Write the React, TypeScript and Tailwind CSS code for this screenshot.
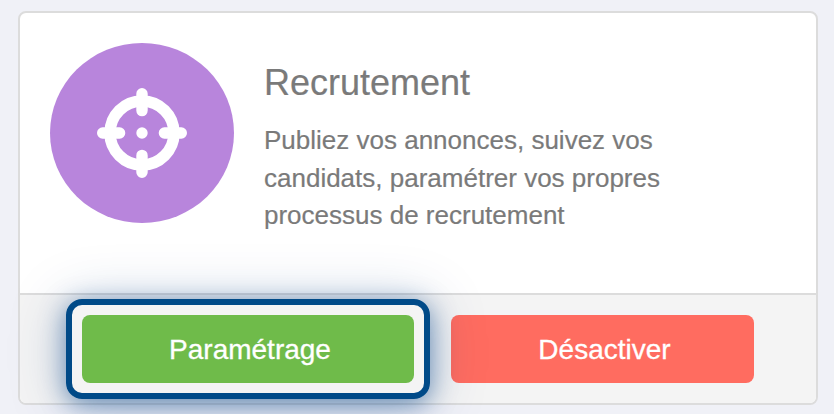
import * as React from 'react';

interface ActionButtonProps extends React.ButtonHTMLAttributes<HTMLButtonElement> {
  tone: 'success' | 'danger';
}

const toneClasses = {
  success: 'w-[332px] bg-[#6fbb4a]',
  danger: 'w-[303px] bg-[#ff6c60]',
};

const ActionButton = ({ tone, children, ...props }: ActionButtonProps) => (
  <button
    type="button"
    className={`h-[68px] rounded-lg pt-0.5 pl-1 text-[28px] leading-none text-white [-webkit-text-stroke:0.3px] ${toneClasses[tone]}`}
    {...props}
  >
    {children}
  </button>
);

const TargetIcon = () => (
  <svg
    width="90"
    height="90"
    viewBox="0 0 90 90"
    fill="none"
    stroke="white"
    strokeWidth="11.4"
    strokeLinecap="round"
    aria-hidden="true"
  >
    <circle cx="45" cy="45" r="32" />
    <path d="M45 5.7v16.9M45 67.4v16.9M5.7 45h16.9M67.4 45h16.9" />
    <circle cx="45" cy="45" r="5.7" fill="white" stroke="none" />
  </svg>
);

/** Outlined frame with a glow around the primary action */
const Highlight = ({ children }: { children: React.ReactNode }) => (
  <div className="relative z-10 rounded-2xl border-[6px] border-[#004a88] p-2.5 shadow-[0_5px_24px_rgba(0,64,136,0.5),0_4px_56px_rgba(0,64,136,0.25)]">
    {children}
  </div>
);

export default function App() {
  return (
    <div className="h-[414px] w-[834px] overflow-hidden bg-[#f0f1f7] px-[18px] pt-[11px] font-['Liberation_Sans',Arial,sans-serif] text-[#7a7a7a]">
      <div className="flex h-[394px] w-[800px] flex-col rounded-lg border-2 border-[#dcdcdc] bg-white">
        <div className="flex h-[280px] shrink-0 gap-[30px] pt-[30px] pl-[30px]">
          <div className="flex h-[180px] w-[184px] shrink-0 items-center justify-center rounded-[50%] bg-[#b885dc]">
            <TargetIcon />
          </div>
          <div className="pt-5 [-webkit-text-stroke:0.2px]">
            <h2 className="text-[36px] leading-10">Recrutement</h2>
            <p className="mt-[19px] text-[26px] leading-[37.5px] whitespace-nowrap">
              Publiez vos annonces, suivez vos
              <br />
              candidats, paramétrer vos propres
              <br />
              processus de recrutement
            </p>
          </div>
        </div>
        <div className="flex flex-1 items-start gap-[21px] rounded-b-md border-t-2 border-[#dcdcdc] bg-[#f4f4f4] pt-1 pl-[46px]">
          <Highlight>
            <ActionButton tone="success">Paramétrage</ActionButton>
          </Highlight>
          <div className="pt-4">
            <ActionButton tone="danger">Désactiver</ActionButton>
          </div>
        </div>
      </div>
    </div>
  );
}
